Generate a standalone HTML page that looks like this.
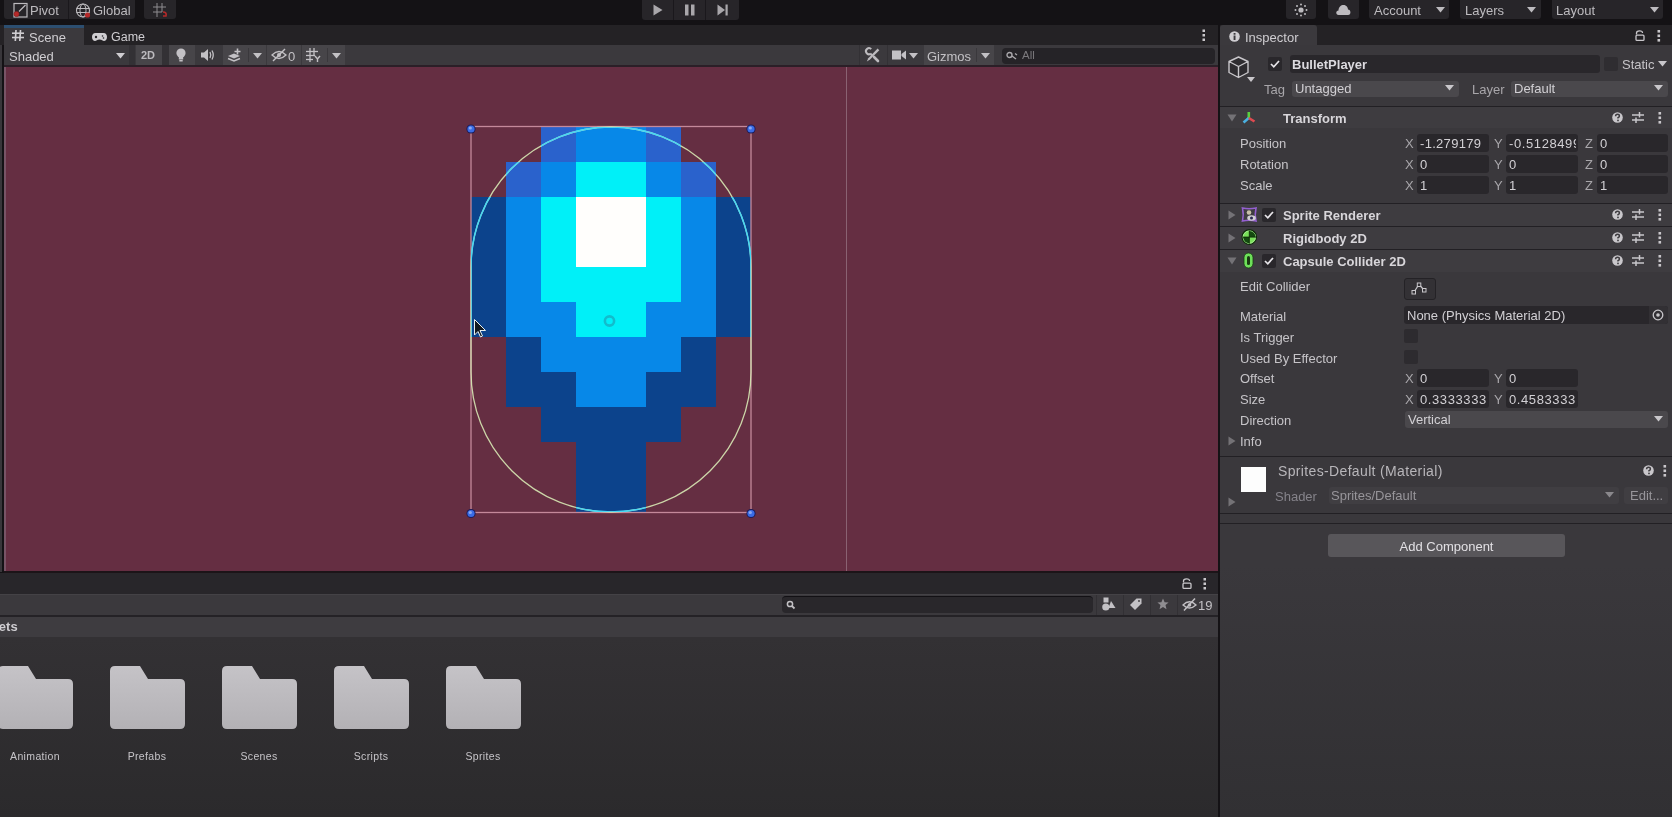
<!DOCTYPE html>
<html><head><meta charset="utf-8">
<style>
*{margin:0;padding:0;box-sizing:border-box}
html,body{width:1672px;height:817px;overflow:hidden;background:#141215;font-family:"Liberation Sans",sans-serif;color:#d2d0d4;font-size:12px}
.a{position:absolute}
.t{position:absolute;white-space:nowrap;line-height:1;will-change:transform}
svg{position:absolute;overflow:visible}
.btn{position:absolute;background:#272529}
.tb{position:absolute;background:#474549}
.fld{position:absolute;background:#29272b;border-radius:3px}
.dd{position:absolute;background:#4a484c;border-radius:3px}
.lbl{position:absolute;white-space:nowrap;line-height:1;color:#c9c7cb;font-size:12px}
.hdr{position:absolute;left:1220px;width:452px;background:#3e3c40}
.div{position:absolute;left:1220px;width:452px;height:1px;background:#222024}
.tri{position:absolute;width:0;height:0}
</style></head><body>

<!-- ================= TOP BAR ================= -->
<div class="btn" style="left:4px;top:0;width:131px;height:19px;border-radius:0 0 3px 3px"></div>
<div class="a" style="left:68px;top:0;width:1px;height:19px;background:#1a181c"></div>
<svg style="left:13px;top:3px" width="16" height="16" viewBox="0 0 16 16">
  <rect x="1" y="0.5" width="13" height="13.5" fill="none" stroke="#bdbbbf" stroke-width="1.2"/>
  <line x1="6" y1="8.5" x2="12.5" y2="2" stroke="#bdbbbf" stroke-width="1.2"/>
  <circle cx="3.5" cy="11" r="2.6" fill="#b52a2a" stroke="#8a2020" stroke-width="0.6"/>
</svg>
<div class="t" style="left:30px;top:4px;font-size:13px;color:#bdbbbf">Pivot</div>
<svg style="left:76px;top:3px" width="16" height="16" viewBox="0 0 16 16">
  <circle cx="7" cy="7.5" r="6.5" fill="none" stroke="#bdbbbf" stroke-width="1.1"/>
  <ellipse cx="7" cy="7.5" rx="3" ry="6.5" fill="none" stroke="#bdbbbf" stroke-width="1"/>
  <line x1="0.5" y1="5.5" x2="13.5" y2="5.5" stroke="#bdbbbf" stroke-width="1"/>
  <line x1="0.5" y1="9.5" x2="13.5" y2="9.5" stroke="#bdbbbf" stroke-width="1"/>
  <circle cx="11.5" cy="12" r="2.6" fill="#b52a2a"/>
</svg>
<div class="t" style="left:93px;top:4px;font-size:13px;color:#bdbbbf">Global</div>
<div class="btn" style="left:144px;top:0;width:32px;height:19px;border-radius:0 0 3px 3px"></div>
<svg style="left:153px;top:3px" width="16" height="16" viewBox="0 0 16 16">
  <g stroke="#8f8d91" stroke-width="1"><line x1="4" y1="0" x2="4" y2="14"/><line x1="9" y1="0" x2="9" y2="9"/><line x1="0" y1="4" x2="13" y2="4"/><line x1="0" y1="9" x2="9" y2="9"/></g>
  <path d="M10 9 q4 0 3 4 l-3 0" fill="none" stroke="#b52a2a" stroke-width="1.6"/>
</svg>

<!-- play -->
<div class="btn" style="left:642px;top:0;width:97px;height:20px;border-radius:0 0 3px 3px"></div>
<div class="a" style="left:673px;top:0;width:1px;height:20px;background:#1a181c"></div>
<div class="a" style="left:705px;top:0;width:1px;height:20px;background:#1a181c"></div>
<svg style="left:652px;top:4px" width="12" height="12" viewBox="0 0 12 12"><path d="M1.5 0.5 L10.5 6 L1.5 11.5Z" fill="#a9a7ab"/></svg>
<svg style="left:684px;top:4px" width="12" height="12" viewBox="0 0 12 12"><rect x="1" y="0.5" width="3.5" height="11" fill="#a9a7ab"/><rect x="7" y="0.5" width="3.5" height="11" fill="#a9a7ab"/></svg>
<svg style="left:717px;top:4px" width="12" height="12" viewBox="0 0 12 12"><path d="M0.5 0.5 L8 6 L0.5 11.5Z" fill="#a9a7ab"/><rect x="8.5" y="0.5" width="2.2" height="11" fill="#a9a7ab"/></svg>

<!-- right top -->
<div class="btn" style="left:1286px;top:0;width:30px;height:19px;border-radius:0 0 3px 3px"></div>
<svg style="left:1293px;top:3px" width="16" height="14" viewBox="0 0 16 14">
  <g fill="#bdbbbf"><circle cx="8" cy="7" r="2.6"/><circle cx="8" cy="1.5" r="1"/><circle cx="8" cy="12.5" r="1"/><circle cx="2.5" cy="7" r="1"/><circle cx="13.5" cy="7" r="1"/><circle cx="4" cy="3" r="1"/><circle cx="12" cy="3" r="1"/><circle cx="4" cy="11" r="1"/><circle cx="12" cy="11" r="1"/></g>
</svg>
<div class="btn" style="left:1328px;top:0;width:31px;height:19px;border-radius:0 0 3px 3px"></div>
<svg style="left:1335px;top:3px" width="17" height="13" viewBox="0 0 17 13">
  <path d="M3.5 12 C0.5 12 0.5 7.5 3.5 7.5 C3.5 4 6 2 8.5 2 C11.5 2 13 4.5 13 6.5 C16 6.5 16.5 12 13 12Z" fill="#bdbbbf"/>
</svg>
<div class="btn" style="left:1369px;top:0;width:80px;height:19px;border-radius:0 0 3px 3px"></div>
<div class="t" style="left:1374px;top:4px;font-size:13px;color:#bdbbbf">Account</div>
<svg style="left:1436px;top:7px" width="9" height="6" viewBox="0 0 9 6"><path d="M0 0H9L4.5 5.5Z" fill="#bdbbbf"/></svg>
<div class="btn" style="left:1460px;top:0;width:81px;height:19px;border-radius:0 0 3px 3px"></div>
<div class="t" style="left:1465px;top:4px;font-size:13px;color:#bdbbbf">Layers</div>
<svg style="left:1527px;top:7px" width="9" height="6" viewBox="0 0 9 6"><path d="M0 0H9L4.5 5.5Z" fill="#bdbbbf"/></svg>
<div class="btn" style="left:1552px;top:0;width:111px;height:19px;border-radius:0 0 3px 3px"></div>
<div class="t" style="left:1556px;top:4px;font-size:13px;color:#bdbbbf">Layout</div>
<svg style="left:1650px;top:7px" width="9" height="6" viewBox="0 0 9 6"><path d="M0 0H9L4.5 5.5Z" fill="#bdbbbf"/></svg>

<!-- ================= SCENE TAB BAR ================= -->
<div class="a" style="left:0;top:25px;width:1219px;height:20px;background:#242225"></div>
<div class="a" style="left:0;top:45px;width:2px;height:527px;background:#38363a"></div>
<div class="a" style="left:2px;top:45px;width:2px;height:527px;background:#141215"></div>
<div class="a" style="left:4px;top:25px;width:80px;height:20px;background:#3b393d"></div>
<div class="a" style="left:4px;top:25px;width:80px;height:3px;background:#2c4e70"></div>
<svg style="left:12px;top:30px" width="12" height="11" viewBox="0 0 12 11">
  <g stroke="#cfcdd1" stroke-width="1.6"><line x1="4" y1="0" x2="3.3" y2="11"/><line x1="8.5" y1="0" x2="7.8" y2="11"/><line x1="0" y1="3.2" x2="12" y2="3.2"/><line x1="0" y1="7.5" x2="12" y2="7.5"/></g>
</svg>
<div class="t" style="left:29px;top:31px;font-size:13px;color:#cfcdd1">Scene</div>
<svg style="left:92px;top:33px" width="15" height="8" viewBox="0 0 15 8">
  <path d="M3.5 0H11.5C14 0 15 2 15 4C15 6.5 13.5 8 12 8C10.5 8 10 6.5 7.5 6.5C5 6.5 4.5 8 3 8C1.5 8 0 6.5 0 4C0 2 1 0 3.5 0Z" fill="#cfcdd1"/>
  <circle cx="4" cy="4" r="1.2" fill="#262428"/><circle cx="10.5" cy="3" r="0.8" fill="#262428"/><circle cx="11.5" cy="5" r="0.8" fill="#262428"/>
</svg>
<div class="t" style="left:111px;top:31px;font-size:12.5px;color:#cfcdd1">Game</div>
<svg style="left:1202px;top:29px" width="4" height="13" viewBox="0 0 4 13"><g fill="#c9c7cb"><rect x="0.5" y="0.5" width="2.5" height="2.5"/><rect x="0.5" y="5" width="2.5" height="2.5"/><rect x="0.5" y="9.5" width="2.5" height="2.5"/></g></svg>

<!-- ================= SCENE TOOLBAR ================= -->
<div class="a" style="left:4px;top:45px;width:1214px;height:21px;background:#3b393d"></div>
<div class="a" style="left:4px;top:65px;width:1214px;height:2px;background:#2b1f27"></div>
<div class="t" style="left:9px;top:50px;font-size:13px;color:#cfcdd1">Shaded</div>
<svg style="left:116px;top:53px" width="9" height="6" viewBox="0 0 9 6"><path d="M0 0H9L4.5 5.5Z" fill="#cfcdd1"/></svg>
<div class="a" style="left:129px;top:45px;width:6px;height:20px;background:#333135"></div>


<!-- toolbar buttons -->
<div class="tb" style="left:136px;top:45px;width:26px;height:20px"></div>
<div class="t" style="left:141px;top:50px;font-size:11px;font-weight:bold;color:#bdbbbf">2D</div>
<div class="a" style="left:162px;top:45px;width:7px;height:20px;background:#333135"></div>
<div class="tb" style="left:169px;top:45px;width:26px;height:20px"></div>
<svg style="left:175px;top:48px" width="12" height="14" viewBox="0 0 12 14">
  <circle cx="6" cy="5" r="4.6" fill="#c3c1c5"/><rect x="3.8" y="8.5" width="4.4" height="3" fill="#c3c1c5"/><rect x="4.3" y="12" width="3.4" height="1.5" fill="#c3c1c5"/>
</svg>
<svg style="left:201px;top:49px" width="14" height="12" viewBox="0 0 14 12">
  <path d="M0 3.5H3L7 0V12L3 8.5H0Z" fill="#c3c1c5"/><path d="M9 3 Q10.5 6 9 9" stroke="#c3c1c5" stroke-width="1.3" fill="none"/><path d="M11 1.5 Q13.5 6 11 10.5" stroke="#c3c1c5" stroke-width="1.3" fill="none"/>
</svg>
<div class="tb" style="left:223px;top:45px;width:43px;height:20px"></div>
<div class="a" style="left:248px;top:48px;width:1px;height:14px;background:#3a383c"></div>
<svg style="left:227px;top:48px" width="16" height="14" viewBox="0 0 16 14">
  <path d="M1 8 L7 5.5 L13 8 L7 10.5Z" fill="#c3c1c5"/><path d="M1 10.5 L7 13 L13 10.5" stroke="#c3c1c5" stroke-width="1.4" fill="none"/>
  <path d="M10.5 0.5V6.5M7.5 3.5H13.5" stroke="#c3c1c5" stroke-width="1.6"/>
</svg>
<svg style="left:253px;top:53px" width="9" height="6" viewBox="0 0 9 6"><path d="M0 0H9L4.5 5.5Z" fill="#c3c1c5"/></svg>
<div class="tb" style="left:267px;top:45px;width:34px;height:20px"></div>
<svg style="left:271px;top:48px" width="17" height="14" viewBox="0 0 17 14">
  <path d="M1 7 Q8 0 15 7 Q8 14 1 7Z" stroke="#c3c1c5" stroke-width="1.3" fill="none"/><circle cx="8" cy="7" r="2" fill="#c3c1c5"/><line x1="2" y1="13" x2="14" y2="1" stroke="#c3c1c5" stroke-width="1.5"/>
</svg>
<div class="t" style="left:288px;top:50px;font-size:13px;color:#c3c1c5">0</div>
<div class="tb" style="left:302px;top:45px;width:43px;height:20px"></div>
<div class="a" style="left:327px;top:48px;width:1px;height:14px;background:#3a383c"></div>
<svg style="left:306px;top:48px" width="16" height="14" viewBox="0 0 16 14">
  <g stroke="#c3c1c5" stroke-width="1.3"><line x1="4" y1="0" x2="4" y2="14"/><line x1="8" y1="0" x2="8" y2="8"/><line x1="0" y1="3.5" x2="12" y2="3.5"/><line x1="0" y1="7.5" x2="9" y2="7.5"/><line x1="0" y1="11.5" x2="7" y2="11.5"/></g>
  <path d="M9 8 L11.5 11 L14 8 M11.5 11 V14" stroke="#c3c1c5" stroke-width="1.4" fill="none"/>
</svg>
<svg style="left:332px;top:53px" width="9" height="6" viewBox="0 0 9 6"><path d="M0 0H9L4.5 5.5Z" fill="#c3c1c5"/></svg>

<!-- right side toolbar -->
<div class="a" style="left:859px;top:45px;width:1px;height:20px;background:#333135"></div>
<svg style="left:864px;top:47px" width="18" height="16" viewBox="0 0 18 16"><path d="M7.2 2.2 A3 3 0 1 0 6.5 6.8" fill="none" stroke="#bdbbbf" stroke-width="2"/><line x1="6.2" y1="6.5" x2="8.2" y2="8.5" stroke="#bdbbbf" stroke-width="2"/><line x1="10" y1="10" x2="14" y2="14" stroke="#bdbbbf" stroke-width="2.6" stroke-linecap="round"/><path d="M13.6 1.5 L15.3 3.2 L6 12.5 L2.8 14.5 L4.3 11.2Z" fill="#bdbbbf"/></svg>
<div class="a" style="left:887px;top:45px;width:1px;height:20px;background:#333135"></div>
<svg style="left:892px;top:50px" width="14" height="10" viewBox="0 0 14 10"><rect x="0" y="0.5" width="9" height="9" fill="#c3c1c5"/><path d="M9.5 4 L14 0.5V9.5L9.5 6Z" fill="#c3c1c5"/></svg>
<svg style="left:909px;top:53px" width="9" height="6" viewBox="0 0 9 6"><path d="M0 0H9L4.5 5.5Z" fill="#c3c1c5"/></svg>
<div class="tb" style="left:924px;top:45px;width:70px;height:20px"></div>
<div class="a" style="left:976px;top:48px;width:1px;height:14px;background:#3a383c"></div>
<div class="t" style="left:927px;top:50px;font-size:13px;color:#c3c1c5">Gizmos</div>
<svg style="left:981px;top:53px" width="9" height="6" viewBox="0 0 9 6"><path d="M0 0H9L4.5 5.5Z" fill="#c3c1c5"/></svg>
<div class="a" style="left:1002px;top:48px;width:213px;height:16px;background:#252327;border-radius:4px"></div>
<svg style="left:1006px;top:51px" width="12" height="9" viewBox="0 0 12 9"><circle cx="3.5" cy="4" r="2.5" stroke="#a9a7ab" stroke-width="1.4" fill="none"/><path d="M6 5 L10 8 M9 2.5 L11 4" stroke="#a9a7ab" stroke-width="1.4"/></svg>
<div class="t" style="left:1022px;top:50px;font-size:11.5px;color:#7b797d">All</div>
<div class="a" style="left:1218px;top:25px;width:2px;height:792px;background:#141215"></div>

<!-- ================= SCENE VIEW ================= -->
<div class="a" style="left:4px;top:67px;width:2px;height:505px;background:#785466"></div>
<div class="a" style="left:6px;top:67px;width:1212px;height:505px;background:#652e42"></div>
<div class="a" style="left:846px;top:67px;width:1px;height:505px;background:#8a6272"></div>
<div class="a" style="left:4px;top:571px;width:1214px;height:2px;background:#1c1418"></div>


<!-- sprite -->
<svg style="left:471px;top:127px" width="280" height="385" viewBox="0 0 280 385" shape-rendering="crispEdges"><rect x="70" y="0" width="35" height="35" fill="#2a62cc"/><rect x="105" y="0" width="35" height="35" fill="#0788e8"/><rect x="140" y="0" width="35" height="35" fill="#0788e8"/><rect x="175" y="0" width="35" height="35" fill="#2a62cc"/><rect x="35" y="35" width="35" height="35" fill="#2a62cc"/><rect x="70" y="35" width="35" height="35" fill="#0788e8"/><rect x="105" y="35" width="35" height="35" fill="#00f0f8"/><rect x="140" y="35" width="35" height="35" fill="#00f0f8"/><rect x="175" y="35" width="35" height="35" fill="#0788e8"/><rect x="210" y="35" width="35" height="35" fill="#2a62cc"/><rect x="0" y="70" width="35" height="35" fill="#0c438c"/><rect x="35" y="70" width="35" height="35" fill="#0788e8"/><rect x="70" y="70" width="35" height="35" fill="#00f0f8"/><rect x="105" y="70" width="35" height="35" fill="#fffefc"/><rect x="140" y="70" width="35" height="35" fill="#fffefc"/><rect x="175" y="70" width="35" height="35" fill="#00f0f8"/><rect x="210" y="70" width="35" height="35" fill="#0788e8"/><rect x="245" y="70" width="35" height="35" fill="#0c438c"/><rect x="0" y="105" width="35" height="35" fill="#0c438c"/><rect x="35" y="105" width="35" height="35" fill="#0788e8"/><rect x="70" y="105" width="35" height="35" fill="#00f0f8"/><rect x="105" y="105" width="35" height="35" fill="#fffefc"/><rect x="140" y="105" width="35" height="35" fill="#fffefc"/><rect x="175" y="105" width="35" height="35" fill="#00f0f8"/><rect x="210" y="105" width="35" height="35" fill="#0788e8"/><rect x="245" y="105" width="35" height="35" fill="#0c438c"/><rect x="0" y="140" width="35" height="35" fill="#0c438c"/><rect x="35" y="140" width="35" height="35" fill="#0788e8"/><rect x="70" y="140" width="35" height="35" fill="#00f0f8"/><rect x="105" y="140" width="35" height="35" fill="#00f0f8"/><rect x="140" y="140" width="35" height="35" fill="#00f0f8"/><rect x="175" y="140" width="35" height="35" fill="#00f0f8"/><rect x="210" y="140" width="35" height="35" fill="#0788e8"/><rect x="245" y="140" width="35" height="35" fill="#0c438c"/><rect x="0" y="175" width="35" height="35" fill="#0c438c"/><rect x="35" y="175" width="35" height="35" fill="#0788e8"/><rect x="70" y="175" width="35" height="35" fill="#0788e8"/><rect x="105" y="175" width="35" height="35" fill="#00f0f8"/><rect x="140" y="175" width="35" height="35" fill="#00f0f8"/><rect x="175" y="175" width="35" height="35" fill="#0788e8"/><rect x="210" y="175" width="35" height="35" fill="#0788e8"/><rect x="245" y="175" width="35" height="35" fill="#0c438c"/><rect x="35" y="210" width="35" height="35" fill="#0c438c"/><rect x="70" y="210" width="35" height="35" fill="#0788e8"/><rect x="105" y="210" width="35" height="35" fill="#0788e8"/><rect x="140" y="210" width="35" height="35" fill="#0788e8"/><rect x="175" y="210" width="35" height="35" fill="#0788e8"/><rect x="210" y="210" width="35" height="35" fill="#0c438c"/><rect x="35" y="245" width="35" height="35" fill="#0c438c"/><rect x="70" y="245" width="35" height="35" fill="#0c438c"/><rect x="105" y="245" width="35" height="35" fill="#0788e8"/><rect x="140" y="245" width="35" height="35" fill="#0788e8"/><rect x="175" y="245" width="35" height="35" fill="#0c438c"/><rect x="210" y="245" width="35" height="35" fill="#0c438c"/><rect x="70" y="280" width="35" height="35" fill="#0c438c"/><rect x="105" y="280" width="35" height="35" fill="#0c438c"/><rect x="140" y="280" width="35" height="35" fill="#0c438c"/><rect x="175" y="280" width="35" height="35" fill="#0c438c"/><rect x="105" y="315" width="35" height="35" fill="#0c438c"/><rect x="140" y="315" width="35" height="35" fill="#0c438c"/><rect x="105" y="350" width="35" height="35" fill="#0c438c"/><rect x="140" y="350" width="35" height="35" fill="#0c438c"/></svg>
<svg style="left:0;top:0" width="1672" height="817" viewBox="0 0 1672 817">
  <rect x="471" y="126.5" width="280" height="386" fill="none" stroke="#c4899a" stroke-width="1.3"/>
  <defs><clipPath id="spr"><rect x="541" y="127" width="35" height="35"/><rect x="576" y="127" width="35" height="35"/><rect x="611" y="127" width="35" height="35"/><rect x="646" y="127" width="35" height="35"/><rect x="506" y="162" width="35" height="35"/><rect x="541" y="162" width="35" height="35"/><rect x="576" y="162" width="35" height="35"/><rect x="611" y="162" width="35" height="35"/><rect x="646" y="162" width="35" height="35"/><rect x="681" y="162" width="35" height="35"/><rect x="471" y="197" width="35" height="35"/><rect x="506" y="197" width="35" height="35"/><rect x="541" y="197" width="35" height="35"/><rect x="576" y="197" width="35" height="35"/><rect x="611" y="197" width="35" height="35"/><rect x="646" y="197" width="35" height="35"/><rect x="681" y="197" width="35" height="35"/><rect x="716" y="197" width="35" height="35"/><rect x="471" y="232" width="35" height="35"/><rect x="506" y="232" width="35" height="35"/><rect x="541" y="232" width="35" height="35"/><rect x="576" y="232" width="35" height="35"/><rect x="611" y="232" width="35" height="35"/><rect x="646" y="232" width="35" height="35"/><rect x="681" y="232" width="35" height="35"/><rect x="716" y="232" width="35" height="35"/><rect x="471" y="267" width="35" height="35"/><rect x="506" y="267" width="35" height="35"/><rect x="541" y="267" width="35" height="35"/><rect x="576" y="267" width="35" height="35"/><rect x="611" y="267" width="35" height="35"/><rect x="646" y="267" width="35" height="35"/><rect x="681" y="267" width="35" height="35"/><rect x="716" y="267" width="35" height="35"/><rect x="471" y="302" width="35" height="35"/><rect x="506" y="302" width="35" height="35"/><rect x="541" y="302" width="35" height="35"/><rect x="576" y="302" width="35" height="35"/><rect x="611" y="302" width="35" height="35"/><rect x="646" y="302" width="35" height="35"/><rect x="681" y="302" width="35" height="35"/><rect x="716" y="302" width="35" height="35"/><rect x="506" y="337" width="35" height="35"/><rect x="541" y="337" width="35" height="35"/><rect x="576" y="337" width="35" height="35"/><rect x="611" y="337" width="35" height="35"/><rect x="646" y="337" width="35" height="35"/><rect x="681" y="337" width="35" height="35"/><rect x="506" y="372" width="35" height="35"/><rect x="541" y="372" width="35" height="35"/><rect x="576" y="372" width="35" height="35"/><rect x="611" y="372" width="35" height="35"/><rect x="646" y="372" width="35" height="35"/><rect x="681" y="372" width="35" height="35"/><rect x="541" y="407" width="35" height="35"/><rect x="576" y="407" width="35" height="35"/><rect x="611" y="407" width="35" height="35"/><rect x="646" y="407" width="35" height="35"/><rect x="576" y="442" width="35" height="35"/><rect x="611" y="442" width="35" height="35"/><rect x="576" y="477" width="35" height="35"/><rect x="611" y="477" width="35" height="35"/></clipPath></defs><path d="M471 267 A140 140 0 0 1 751 267 L751 372 A140 140 0 0 1 471 372 Z" fill="none" stroke="rgba(215,232,180,0.9)" stroke-width="1.3"/><path d="M471 267 A140 140 0 0 1 751 267 L751 372 A140 140 0 0 1 471 372 Z" fill="none" stroke="#48d8f4" stroke-width="1.5" clip-path="url(#spr)"/>
  <circle cx="609.5" cy="321" r="4.6" fill="none" stroke="#12bccc" stroke-width="2.6"/>
  <g>
   <circle cx="471" cy="129" r="4.6" fill="#1c1c5a"/><circle cx="471" cy="129" r="3.6" fill="#3a6ce6"/><circle cx="470.3" cy="128" r="1.6" fill="#8aa8f0"/>
   <circle cx="751" cy="129" r="4.6" fill="#1c1c5a"/><circle cx="751" cy="129" r="3.6" fill="#3a6ce6"/><circle cx="750.3" cy="128" r="1.6" fill="#8aa8f0"/>
   <circle cx="471" cy="513.5" r="4.6" fill="#1c1c5a"/><circle cx="471" cy="513.5" r="3.6" fill="#3a6ce6"/><circle cx="470.3" cy="512.5" r="1.6" fill="#8aa8f0"/>
   <circle cx="751" cy="513.5" r="4.6" fill="#1c1c5a"/><circle cx="751" cy="513.5" r="3.6" fill="#3a6ce6"/><circle cx="750.3" cy="512.5" r="1.6" fill="#8aa8f0"/>
  </g>
  <path d="M474.5 319.5 L474.5 335 L478 331.5 L480.5 337 L482.5 336 L480 330.5 L485.5 330.5 Z" fill="#101820" stroke="#e8f0f0" stroke-width="1"/>
</svg>


<!-- ================= PROJECT WINDOW ================= -->
<div class="a" style="left:0;top:573px;width:1218px;height:21px;background:#28262a"></div>
<svg style="left:1182px;top:578px" width="10" height="11" viewBox="0 0 10 11"><path d="M1.5 4.5 V3 Q1.5 0.8 4.5 0.8 Q7.5 0.8 7.5 3" fill="none" stroke="#c9c7cb" stroke-width="1.3"/><rect x="1" y="5.2" width="8" height="5.2" rx="1" fill="none" stroke="#c9c7cb" stroke-width="1.3"/></svg>
<svg style="left:1203px;top:578px" width="4" height="12" viewBox="0 0 4 12"><g fill="#c9c7cb"><rect x="0.5" y="0" width="2.5" height="2.5"/><rect x="0.5" y="4.5" width="2.5" height="2.5"/><rect x="0.5" y="9" width="2.5" height="2.5"/></g></svg>
<div class="a" style="left:0;top:594px;width:1218px;height:21px;background:#3b393d;border-top:1px solid #444246"></div>
<div class="a" style="left:782px;top:596px;width:311px;height:17px;background:#29272b;border-radius:4px;border-top:1px solid #121014"></div>
<svg style="left:786px;top:600px" width="10" height="10" viewBox="0 0 10 10"><circle cx="4" cy="4" r="2.6" fill="none" stroke="#c3c1c5" stroke-width="1.5"/><line x1="5.8" y1="5.8" x2="8.5" y2="8.5" stroke="#c3c1c5" stroke-width="1.8"/></svg>
<div class="a" style="left:1096px;top:595px;width:1px;height:20px;background:#323034"></div>
<div class="a" style="left:1123px;top:595px;width:1px;height:20px;background:#323034"></div>
<div class="a" style="left:1150px;top:595px;width:1px;height:20px;background:#323034"></div>
<div class="a" style="left:1177px;top:595px;width:1px;height:20px;background:#323034"></div>
<svg style="left:1102px;top:597px" width="14" height="14" viewBox="0 0 14 14"><rect x="1.5" y="0.5" width="5" height="5" fill="#c3c1c5"/><circle cx="3.8" cy="10" r="3.6" fill="#c3c1c5"/><path d="M9 4 L13.5 11 H6.5Z" fill="#c3c1c5"/></svg>
<svg style="left:1130px;top:598px" width="12" height="12" viewBox="0 0 12 12"><path d="M6.5 0.5 H11.5 V5.5 L5 12 L0 7Z" fill="#c3c1c5"/><circle cx="9" cy="3" r="0.9" fill="#3b393d"/></svg>
<svg style="left:1157px;top:598px" width="12" height="12" viewBox="0 0 12 12"><path d="M6 0.5 L7.6 4.3 L11.6 4.5 L8.5 7.1 L9.5 11.2 L6 9 L2.5 11.2 L3.5 7.1 L0.4 4.5 L4.4 4.3Z" fill="#8f8d91"/></svg>
<svg style="left:1182px;top:598px" width="16" height="13" viewBox="0 0 16 13"><path d="M1 7 Q7.5 0.5 14 7 Q7.5 13 1 7Z" stroke="#c3c1c5" stroke-width="1.3" fill="none"/><circle cx="7.5" cy="7" r="1.8" fill="#c3c1c5"/><line x1="2" y1="12.5" x2="13" y2="0.5" stroke="#c3c1c5" stroke-width="1.5"/></svg>
<div class="t" style="left:1198px;top:599px;font-size:13px;color:#c3c1c5">19</div>
<div class="a" style="left:0;top:615px;width:1218px;height:2px;background:#242226"></div>
<div class="a" style="left:0;top:617px;width:1218px;height:20px;background:#3e3c40"></div>
<div class="t" style="left:-25px;top:620px;font-size:13px;font-weight:bold;color:#cfcdd1">Assets</div>
<div class="a" style="left:0;top:637px;width:1218px;height:180px;background:linear-gradient(#333134,#2b2a2c)"></div>
<svg style="left:-2px;top:665px" width="75" height="64" viewBox="0 0 75 64"><defs><linearGradient id="fg0" x1="0" y1="0" x2="0" y2="1"><stop offset="0" stop-color="#c5c3c7"/><stop offset="1" stop-color="#b3b1b5"/></linearGradient></defs><path d="M5 1 H30 L38 14 H70 Q75 14 75 19 V59 Q75 64 70 64 H5 Q0 64 0 59 V6 Q0 1 5 1Z" fill="url(#fg0)"/></svg>
<div class="t" style="left:-5px;width:80px;text-align:center;top:751px;font-size:10.5px;letter-spacing:0.35px;color:#c6c4c8">Animation</div>
<svg style="left:110px;top:665px" width="75" height="64" viewBox="0 0 75 64"><defs><linearGradient id="fg1" x1="0" y1="0" x2="0" y2="1"><stop offset="0" stop-color="#c5c3c7"/><stop offset="1" stop-color="#b3b1b5"/></linearGradient></defs><path d="M5 1 H30 L38 14 H70 Q75 14 75 19 V59 Q75 64 70 64 H5 Q0 64 0 59 V6 Q0 1 5 1Z" fill="url(#fg1)"/></svg>
<div class="t" style="left:107px;width:80px;text-align:center;top:751px;font-size:10.5px;letter-spacing:0.35px;color:#c6c4c8">Prefabs</div>
<svg style="left:222px;top:665px" width="75" height="64" viewBox="0 0 75 64"><defs><linearGradient id="fg2" x1="0" y1="0" x2="0" y2="1"><stop offset="0" stop-color="#c5c3c7"/><stop offset="1" stop-color="#b3b1b5"/></linearGradient></defs><path d="M5 1 H30 L38 14 H70 Q75 14 75 19 V59 Q75 64 70 64 H5 Q0 64 0 59 V6 Q0 1 5 1Z" fill="url(#fg2)"/></svg>
<div class="t" style="left:219px;width:80px;text-align:center;top:751px;font-size:10.5px;letter-spacing:0.35px;color:#c6c4c8">Scenes</div>
<svg style="left:334px;top:665px" width="75" height="64" viewBox="0 0 75 64"><defs><linearGradient id="fg3" x1="0" y1="0" x2="0" y2="1"><stop offset="0" stop-color="#c5c3c7"/><stop offset="1" stop-color="#b3b1b5"/></linearGradient></defs><path d="M5 1 H30 L38 14 H70 Q75 14 75 19 V59 Q75 64 70 64 H5 Q0 64 0 59 V6 Q0 1 5 1Z" fill="url(#fg3)"/></svg>
<div class="t" style="left:331px;width:80px;text-align:center;top:751px;font-size:10.5px;letter-spacing:0.35px;color:#c6c4c8">Scripts</div>
<svg style="left:446px;top:665px" width="75" height="64" viewBox="0 0 75 64"><defs><linearGradient id="fg4" x1="0" y1="0" x2="0" y2="1"><stop offset="0" stop-color="#c5c3c7"/><stop offset="1" stop-color="#b3b1b5"/></linearGradient></defs><path d="M5 1 H30 L38 14 H70 Q75 14 75 19 V59 Q75 64 70 64 H5 Q0 64 0 59 V6 Q0 1 5 1Z" fill="url(#fg4)"/></svg>
<div class="t" style="left:443px;width:80px;text-align:center;top:751px;font-size:10.5px;letter-spacing:0.35px;color:#c6c4c8">Sprites</div>


<!-- ================= INSPECTOR ================= -->
<div class="a" style="left:1220px;top:25px;width:452px;height:20px;background:#242225"></div><div class="a" style="left:1220px;top:25px;width:97px;height:20px;background:#3b393d;border-radius:3px 3px 0 0"></div><svg style="left:1229px;top:31px" width="11" height="11" viewBox="0 0 11 11"><circle cx="5.5" cy="5.5" r="5.3" fill="#cfcdd1"/><rect x="4.6" y="4.5" width="1.9" height="4.5" fill="#3b393d"/><rect x="4.6" y="2" width="1.9" height="1.7" fill="#3b393d"/></svg><div class="t" style="left:1245px;top:31px;font-size:13px;color:#cfcdd1">Inspector</div><svg style="left:1635px;top:30px" width="10" height="11" viewBox="0 0 10 11"><path d="M1.5 4.5 V3 Q1.5 0.8 4.5 0.8 Q7.5 0.8 7.5 3" fill="none" stroke="#c9c7cb" stroke-width="1.3"/><rect x="1" y="5.2" width="8" height="5.2" rx="1" fill="none" stroke="#c9c7cb" stroke-width="1.3"/></svg><svg style="left:1657px;top:30px" width="4" height="12" viewBox="0 0 4 12"><g fill="#c9c7cb"><rect x="0.5" y="0" width="2.6" height="2.6"/><rect x="0.5" y="4.5" width="2.6" height="2.6"/><rect x="0.5" y="9" width="2.6" height="2.6"/></g></svg><div class="a" style="left:1220px;top:45px;width:452px;height:772px;background:linear-gradient(#3a383c 0px,#3a383c 520px,#313033 772px)"></div><svg style="left:1228px;top:56px" width="22" height="24" viewBox="0 0 22 24"><path d="M10.5 1 L20 5.5 V16.5 L10.5 21.5 L1 16.5 V5.5Z" fill="#2e2c30"/><path d="M10.5 1 L20 5.5 V16.5 L10.5 21.5 L1 16.5 V5.5Z M1 5.5 L10.5 10.5 L20 5.5 M10.5 10.5 V21.5" fill="none" stroke="#c9c7cb" stroke-width="1.4" stroke-linejoin="round"/></svg><svg style="left:1247px;top:77px" width="8" height="5" viewBox="0 0 8 5"><path d="M0 0H8L4 5Z" fill="#c9c7cb"/></svg><div class="a" style="left:1268px;top:57px;width:14px;height:14px;background:#29272b;border-radius:2px"></div><svg style="left:1270px;top:60px" width="10" height="8" viewBox="0 0 10 8"><path d="M1 4 L3.8 6.8 L9 1" fill="none" stroke="#e6e4e8" stroke-width="1.7"/></svg><div class="fld" style="left:1290px;top:55px;width:310px;height:18px"></div><div class="t" style="left:1292px;top:58px;font-size:13px;color:#dcdadf;font-weight:bold">BulletPlayer</div><div class="a" style="left:1604px;top:57px;width:14px;height:14px;background:#2f2d31;border-radius:2px"></div><div class="t" style="left:1622px;top:58px;font-size:13px;color:#c6c4c8">Static</div><svg style="left:1658px;top:61px" width="9" height="6" viewBox="0 0 9 6"><path d="M0 0H9L4.5 5.5Z" fill="#c9c7cb"/></svg><div class="t" style="left:1264px;top:83px;font-size:13px;color:#a8a6aa">Tag</div><div class="dd" style="left:1292px;top:81px;width:167px;height:16px"></div><div class="t" style="left:1295px;top:82px;font-size:13px;color:#d2d0d4">Untagged</div><svg style="left:1445px;top:85px" width="9" height="6" viewBox="0 0 9 6"><path d="M0 0H9L4.5 5.5Z" fill="#c9c7cb"/></svg><div class="t" style="left:1472px;top:83px;font-size:13px;color:#a8a6aa">Layer</div><div class="dd" style="left:1511px;top:81px;width:157px;height:16px"></div><div class="t" style="left:1514px;top:82px;font-size:13px;color:#d2d0d4">Default</div><svg style="left:1654px;top:85px" width="9" height="6" viewBox="0 0 9 6"><path d="M0 0H9L4.5 5.5Z" fill="#c9c7cb"/></svg><div class="div" style="top:106px"></div><div class="hdr" style="top:107px;height:21px"></div><svg style="left:1227px;top:114px" width="10" height="8" viewBox="0 0 10 8"><path d="M0.5 0.5 L9.5 0.5 L5 7.5Z" fill="#747276"/></svg><svg style="left:1242px;top:111px" width="15" height="14" viewBox="0 0 15 14"><line x1="6.8" y1="1" x2="6.8" y2="7" stroke="#5ad040" stroke-width="2.6"/><line x1="6.8" y1="7" x2="1.5" y2="11.5" stroke="#4ab0e0" stroke-width="2.6"/><line x1="6.8" y1="7" x2="12.5" y2="10.5" stroke="#e04a50" stroke-width="2.6"/></svg><div class="t" style="left:1283px;top:112px;font-size:13px;color:#d8d6da;font-weight:bold">Transform</div><svg style="left:1612px;top:112px" width="11" height="11" viewBox="0 0 11 11"><circle cx="5.5" cy="5.5" r="5.3" fill="#c9c7cb"/><path d="M3.6 4.2 Q3.6 2.2 5.5 2.2 Q7.4 2.2 7.4 3.9 Q7.4 5 6 5.6 V6.6" fill="none" stroke="#3e3c40" stroke-width="1.5"/><circle cx="6" cy="8.4" r="0.9" fill="#3e3c40"/></svg><svg style="left:1632px;top:112px" width="12" height="11" viewBox="0 0 12 11"><g stroke="#c9c7cb" stroke-width="1.5"><line x1="0" y1="3" x2="12" y2="3"/><line x1="0" y1="8" x2="12" y2="8"/><line x1="7.5" y1="0" x2="7.5" y2="5.5"/><line x1="4" y1="5.5" x2="4" y2="11"/></g></svg><svg style="left:1658px;top:112px" width="4" height="12" viewBox="0 0 4 12"><g fill="#c9c7cb"><rect x="0.5" y="0" width="2.6" height="2.6"/><rect x="0.5" y="4.5" width="2.6" height="2.6"/><rect x="0.5" y="9" width="2.6" height="2.6"/></g></svg><div class="t" style="left:1240px;top:137px;font-size:13px;color:#c6c4c8">Position</div><div class="t" style="left:1405px;top:137px;font-size:13px;color:#a8a6aa">X</div><div class="fld" style="left:1417px;top:134px;width:72px;height:18px;overflow:hidden"><div class="t" style="left:3px;top:3px;font-size:13px;letter-spacing:0.3px;color:#d2d0d4">-1.279179</div></div><div class="t" style="left:1494px;top:137px;font-size:13px;color:#a8a6aa">Y</div><div class="fld" style="left:1506px;top:134px;width:72px;height:18px;overflow:hidden"><div class="a" style="left:0;top:0;width:70px;height:18px;overflow:hidden"><div class="t" style="left:3px;top:3px;font-size:13px;letter-spacing:0.6px;color:#d2d0d4">-0.5128499</div></div></div><div class="t" style="left:1585px;top:137px;font-size:13px;color:#a8a6aa">Z</div><div class="fld" style="left:1597px;top:134px;width:71px;height:18px;overflow:hidden"><div class="t" style="left:3px;top:3px;font-size:13px;letter-spacing:0.3px;color:#d2d0d4">0</div></div><div class="t" style="left:1240px;top:158px;font-size:13px;color:#c6c4c8">Rotation</div><div class="t" style="left:1405px;top:158px;font-size:13px;color:#a8a6aa">X</div><div class="fld" style="left:1417px;top:155px;width:72px;height:18px;overflow:hidden"><div class="t" style="left:3px;top:3px;font-size:13px;letter-spacing:0.3px;color:#d2d0d4">0</div></div><div class="t" style="left:1494px;top:158px;font-size:13px;color:#a8a6aa">Y</div><div class="fld" style="left:1506px;top:155px;width:72px;height:18px;overflow:hidden"><div class="t" style="left:3px;top:3px;font-size:13px;letter-spacing:0.3px;color:#d2d0d4">0</div></div><div class="t" style="left:1585px;top:158px;font-size:13px;color:#a8a6aa">Z</div><div class="fld" style="left:1597px;top:155px;width:71px;height:18px;overflow:hidden"><div class="t" style="left:3px;top:3px;font-size:13px;letter-spacing:0.3px;color:#d2d0d4">0</div></div><div class="t" style="left:1240px;top:179px;font-size:13px;color:#c6c4c8">Scale</div><div class="t" style="left:1405px;top:179px;font-size:13px;color:#a8a6aa">X</div><div class="fld" style="left:1417px;top:176px;width:72px;height:18px;overflow:hidden"><div class="t" style="left:3px;top:3px;font-size:13px;letter-spacing:0.3px;color:#d2d0d4">1</div></div><div class="t" style="left:1494px;top:179px;font-size:13px;color:#a8a6aa">Y</div><div class="fld" style="left:1506px;top:176px;width:72px;height:18px;overflow:hidden"><div class="t" style="left:3px;top:3px;font-size:13px;letter-spacing:0.3px;color:#d2d0d4">1</div></div><div class="t" style="left:1585px;top:179px;font-size:13px;color:#a8a6aa">Z</div><div class="fld" style="left:1597px;top:176px;width:71px;height:18px;overflow:hidden"><div class="t" style="left:3px;top:3px;font-size:13px;letter-spacing:0.3px;color:#d2d0d4">1</div></div><div class="div" style="top:203px"></div><div class="hdr" style="top:204px;height:22px"></div><svg style="left:1228px;top:210px" width="8" height="10" viewBox="0 0 8 10"><path d="M0.5 0.5 L7.5 5 L0.5 9.5Z" fill="#747276"/></svg><svg style="left:1241px;top:207px" width="17" height="16" viewBox="0 0 17 16"><path d="M1.5 1 Q8 2.5 15 1 Q13.5 7.5 15 14 Q8 12.5 1.5 14 Q3 7.5 1.5 1Z" fill="none" stroke="#9460d0" stroke-width="1.6"/><circle cx="8" cy="5.5" r="2.3" fill="#c8c0a8"/><ellipse cx="10.5" cy="11" rx="4.3" ry="2.8" fill="#d0ced2"/><circle cx="10.5" cy="11" r="1.5" fill="#2a2850"/></svg><div class="a" style="left:1262px;top:208px;width:14px;height:14px;background:#29272b;border-radius:2px"></div><svg style="left:1264px;top:211px" width="10" height="8" viewBox="0 0 10 8"><path d="M1 4 L3.8 6.8 L9 1" fill="none" stroke="#e6e4e8" stroke-width="1.7"/></svg><div class="t" style="left:1283px;top:209px;font-size:13px;color:#d8d6da;font-weight:bold">Sprite Renderer</div><svg style="left:1612px;top:209px" width="11" height="11" viewBox="0 0 11 11"><circle cx="5.5" cy="5.5" r="5.3" fill="#c9c7cb"/><path d="M3.6 4.2 Q3.6 2.2 5.5 2.2 Q7.4 2.2 7.4 3.9 Q7.4 5 6 5.6 V6.6" fill="none" stroke="#3e3c40" stroke-width="1.5"/><circle cx="6" cy="8.4" r="0.9" fill="#3e3c40"/></svg><svg style="left:1632px;top:209px" width="12" height="11" viewBox="0 0 12 11"><g stroke="#c9c7cb" stroke-width="1.5"><line x1="0" y1="3" x2="12" y2="3"/><line x1="0" y1="8" x2="12" y2="8"/><line x1="7.5" y1="0" x2="7.5" y2="5.5"/><line x1="4" y1="5.5" x2="4" y2="11"/></g></svg><svg style="left:1658px;top:209px" width="4" height="12" viewBox="0 0 4 12"><g fill="#c9c7cb"><rect x="0.5" y="0" width="2.6" height="2.6"/><rect x="0.5" y="4.5" width="2.6" height="2.6"/><rect x="0.5" y="9" width="2.6" height="2.6"/></g></svg><div class="div" style="top:226px"></div><div class="hdr" style="top:227px;height:22px"></div><svg style="left:1228px;top:233px" width="8" height="10" viewBox="0 0 8 10"><path d="M0.5 0.5 L7.5 5 L0.5 9.5Z" fill="#747276"/></svg><svg style="left:1241px;top:229px" width="17" height="17" viewBox="0 0 17 17"><circle cx="8.3" cy="8.1" r="7.2" fill="#78e058" stroke="#0e2a08" stroke-width="1.2"/><circle cx="8.3" cy="8.1" r="6.2" fill="none" stroke="#b0f0a0" stroke-width="0.8"/><path d="M8.3 8.1 V1.9 A6.2 6.2 0 0 1 14.5 8.1Z" fill="#144a10"/><path d="M8.3 8.1 V14.3 A6.2 6.2 0 0 1 2.1 8.1Z" fill="#144a10"/><line x1="8.3" y1="1.5" x2="8.3" y2="14.7" stroke="#0e2a08" stroke-width="0.9"/><line x1="1.5" y1="8.1" x2="15.1" y2="8.1" stroke="#0e2a08" stroke-width="0.9"/></svg><div class="t" style="left:1283px;top:232px;font-size:13px;color:#d8d6da;font-weight:bold">Rigidbody 2D</div><svg style="left:1612px;top:232px" width="11" height="11" viewBox="0 0 11 11"><circle cx="5.5" cy="5.5" r="5.3" fill="#c9c7cb"/><path d="M3.6 4.2 Q3.6 2.2 5.5 2.2 Q7.4 2.2 7.4 3.9 Q7.4 5 6 5.6 V6.6" fill="none" stroke="#3e3c40" stroke-width="1.5"/><circle cx="6" cy="8.4" r="0.9" fill="#3e3c40"/></svg><svg style="left:1632px;top:232px" width="12" height="11" viewBox="0 0 12 11"><g stroke="#c9c7cb" stroke-width="1.5"><line x1="0" y1="3" x2="12" y2="3"/><line x1="0" y1="8" x2="12" y2="8"/><line x1="7.5" y1="0" x2="7.5" y2="5.5"/><line x1="4" y1="5.5" x2="4" y2="11"/></g></svg><svg style="left:1658px;top:232px" width="4" height="12" viewBox="0 0 4 12"><g fill="#c9c7cb"><rect x="0.5" y="0" width="2.6" height="2.6"/><rect x="0.5" y="4.5" width="2.6" height="2.6"/><rect x="0.5" y="9" width="2.6" height="2.6"/></g></svg><div class="div" style="top:249px"></div><div class="hdr" style="top:250px;height:22px"></div><svg style="left:1227px;top:257px" width="10" height="8" viewBox="0 0 10 8"><path d="M0.5 0.5 L9.5 0.5 L5 7.5Z" fill="#747276"/></svg><svg style="left:1243px;top:252px" width="11" height="17" viewBox="0 0 11 17"><rect x="1" y="1" width="9" height="15" rx="4.5" fill="#6ee05a" stroke="#184010" stroke-width="0.8"/><rect x="4" y="4" width="3" height="9" rx="1.5" fill="#1a3a12"/></svg><div class="a" style="left:1262px;top:254px;width:14px;height:14px;background:#29272b;border-radius:2px"></div><svg style="left:1264px;top:257px" width="10" height="8" viewBox="0 0 10 8"><path d="M1 4 L3.8 6.8 L9 1" fill="none" stroke="#e6e4e8" stroke-width="1.7"/></svg><div class="t" style="left:1283px;top:255px;font-size:13px;color:#d8d6da;font-weight:bold">Capsule Collider 2D</div><svg style="left:1612px;top:255px" width="11" height="11" viewBox="0 0 11 11"><circle cx="5.5" cy="5.5" r="5.3" fill="#c9c7cb"/><path d="M3.6 4.2 Q3.6 2.2 5.5 2.2 Q7.4 2.2 7.4 3.9 Q7.4 5 6 5.6 V6.6" fill="none" stroke="#3e3c40" stroke-width="1.5"/><circle cx="6" cy="8.4" r="0.9" fill="#3e3c40"/></svg><svg style="left:1632px;top:255px" width="12" height="11" viewBox="0 0 12 11"><g stroke="#c9c7cb" stroke-width="1.5"><line x1="0" y1="3" x2="12" y2="3"/><line x1="0" y1="8" x2="12" y2="8"/><line x1="7.5" y1="0" x2="7.5" y2="5.5"/><line x1="4" y1="5.5" x2="4" y2="11"/></g></svg><svg style="left:1658px;top:255px" width="4" height="12" viewBox="0 0 4 12"><g fill="#c9c7cb"><rect x="0.5" y="0" width="2.6" height="2.6"/><rect x="0.5" y="4.5" width="2.6" height="2.6"/><rect x="0.5" y="9" width="2.6" height="2.6"/></g></svg><div class="t" style="left:1240px;top:280px;font-size:13px;color:#c6c4c8">Edit Collider</div><div class="a" style="left:1404px;top:278px;width:32px;height:22px;background:#333135;border:1px solid #242226;border-radius:3px"></div><svg style="left:1411px;top:282px" width="17" height="13" viewBox="0 0 17 13"><path d="M3 10 L8 2.5 L13 8" fill="none" stroke="#c9c7cb" stroke-width="1.2"/><rect x="1" y="8.5" width="3.5" height="3.5" fill="#333135" stroke="#c9c7cb" stroke-width="1"/><rect x="6.3" y="1" width="3.5" height="3.5" fill="#333135" stroke="#c9c7cb" stroke-width="1"/><rect x="11.5" y="6.5" width="3.5" height="3.5" fill="#333135" stroke="#c9c7cb" stroke-width="1"/></svg><div class="t" style="left:1240px;top:310px;font-size:13px;color:#c6c4c8">Material</div><div class="fld" style="left:1404px;top:306px;width:264px;height:18px"></div><div class="a" style="left:1649px;top:306px;width:19px;height:18px;background:#323034;border-radius:0 3px 3px 0"></div><div class="t" style="left:1407px;top:309px;font-size:13px;color:#d2d0d4">None (Physics Material 2D)</div><svg style="left:1652px;top:309px" width="12" height="12" viewBox="0 0 12 12"><circle cx="6" cy="6" r="4.8" fill="none" stroke="#c9c7cb" stroke-width="1.3"/><circle cx="6" cy="6" r="1.8" fill="#c9c7cb"/></svg><div class="t" style="left:1240px;top:331px;font-size:13px;color:#c6c4c8">Is Trigger</div><div class="a" style="left:1404px;top:329px;width:14px;height:14px;background:#2d2b2f;border-radius:2px"></div><div class="t" style="left:1240px;top:352px;font-size:13px;color:#c6c4c8">Used By Effector</div><div class="a" style="left:1404px;top:350px;width:14px;height:14px;background:#2d2b2f;border-radius:2px"></div><div class="t" style="left:1240px;top:372px;font-size:13px;color:#c6c4c8">Offset</div><div class="t" style="left:1405px;top:372px;font-size:13px;color:#a8a6aa">X</div><div class="fld" style="left:1417px;top:369px;width:72px;height:18px;overflow:hidden"><div class="t" style="left:3px;top:3px;font-size:13px;letter-spacing:0.3px;color:#d2d0d4">0</div></div><div class="t" style="left:1494px;top:372px;font-size:13px;color:#a8a6aa">Y</div><div class="fld" style="left:1506px;top:369px;width:72px;height:18px;overflow:hidden"><div class="t" style="left:3px;top:3px;font-size:13px;letter-spacing:0.3px;color:#d2d0d4">0</div></div><div class="t" style="left:1240px;top:393px;font-size:13px;color:#c6c4c8">Size</div><div class="t" style="left:1405px;top:393px;font-size:13px;color:#a8a6aa">X</div><div class="fld" style="left:1417px;top:390px;width:72px;height:18px;overflow:hidden"><div class="a" style="left:0;top:0;width:70px;height:18px;overflow:hidden"><div class="t" style="left:3px;top:3px;font-size:13px;letter-spacing:0.6px;color:#d2d0d4">0.3333333</div></div></div><div class="t" style="left:1494px;top:393px;font-size:13px;color:#a8a6aa">Y</div><div class="fld" style="left:1506px;top:390px;width:72px;height:18px;overflow:hidden"><div class="t" style="left:3px;top:3px;font-size:13px;letter-spacing:0.6px;color:#d2d0d4">0.4583333</div></div><div class="t" style="left:1240px;top:414px;font-size:13px;color:#c6c4c8">Direction</div><div class="dd" style="left:1405px;top:411px;width:263px;height:17px"></div><div class="t" style="left:1408px;top:413px;font-size:13px;color:#d2d0d4">Vertical</div><svg style="left:1654px;top:416px" width="9" height="6" viewBox="0 0 9 6"><path d="M0 0H9L4.5 5.5Z" fill="#c9c7cb"/></svg><svg style="left:1228px;top:436px" width="8" height="10" viewBox="0 0 8 10"><path d="M0.5 0.5 L7.5 5 L0.5 9.5Z" fill="#747276"/></svg><div class="t" style="left:1240px;top:435px;font-size:13px;color:#c6c4c8">Info</div><div class="div" style="top:456px;height:1px"></div><div class="hdr" style="top:457px;height:56px;background:#3a383c"></div><div class="a" style="left:1241px;top:467px;width:25px;height:25px;background:#fdfdfd"></div><div class="t" style="left:1278px;top:464px;font-size:14px;letter-spacing:0.35px;color:#b8b6ba" >Sprites-Default (Material)</div><svg style="left:1643px;top:465px" width="11" height="11" viewBox="0 0 11 11"><circle cx="5.5" cy="5.5" r="5.3" fill="#c9c7cb"/><path d="M3.6 4.2 Q3.6 2.2 5.5 2.2 Q7.4 2.2 7.4 3.9 Q7.4 5 6 5.6 V6.6" fill="none" stroke="#3e3c40" stroke-width="1.5"/><circle cx="6" cy="8.4" r="0.9" fill="#3e3c40"/></svg><svg style="left:1663px;top:465px" width="4" height="12" viewBox="0 0 4 12"><g fill="#c9c7cb"><rect x="0.5" y="0" width="2.6" height="2.6"/><rect x="0.5" y="4.5" width="2.6" height="2.6"/><rect x="0.5" y="9" width="2.6" height="2.6"/></g></svg><div class="t" style="left:1275px;top:490px;font-size:13px;color:#85838a">Shader</div><div class="a" style="left:1329px;top:487px;width:290px;height:17px;background:#403e42;border-radius:3px"></div><div class="t" style="left:1331px;top:489px;font-size:13px;color:#97959a">Sprites/Default</div><svg style="left:1605px;top:492px" width="9" height="6" viewBox="0 0 9 6"><path d="M0 0H9L4.5 5.5Z" fill="#8a888c"/></svg><div class="a" style="left:1624px;top:487px;width:44px;height:17px;background:#403e42;border-radius:3px"></div><div class="t" style="left:1630px;top:489px;font-size:13px;color:#97959a">Edit...</div><svg style="left:1228px;top:497px" width="8" height="10" viewBox="0 0 8 10"><path d="M0.5 0.5 L7.5 5 L0.5 9.5Z" fill="#747276"/></svg><div class="div" style="top:513px"></div><div class="div" style="top:523px"></div><div class="a" style="left:1328px;top:534px;width:237px;height:23px;background:#58565a;border-radius:3px"></div><div class="t" style="left:1328px;width:237px;text-align:center;top:540px;font-size:13px;color:#e2e0e4">Add Component</div>
</body></html>
